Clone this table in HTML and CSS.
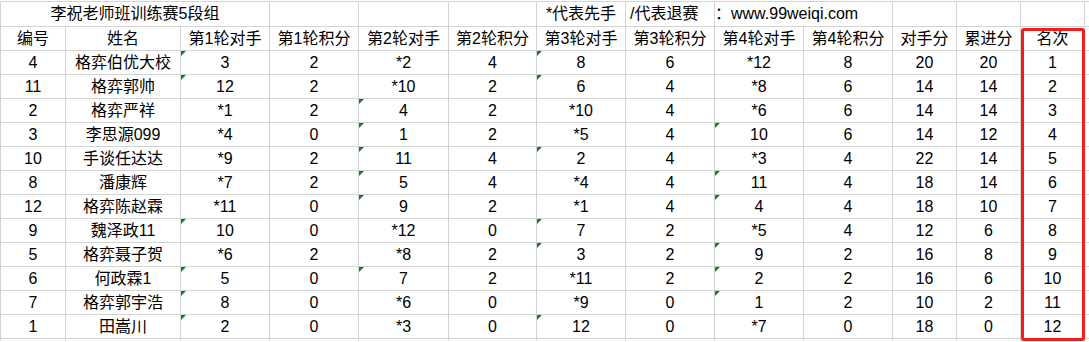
FILE: index.html
```html
<!DOCTYPE html>
<html lang="zh-CN">
<head>
<meta charset="utf-8">
<title>李祝老师班训练赛5段组</title>
<link rel="stylesheet" href="styles.css">
</head>
<body>
<div class="sheet">
  <div class="cell title">李祝老师班训练赛5段组</div>
  <div class="cell"></div><div class="cell"></div><div class="cell"></div>
  <div class="cell">*代表先手</div>
  <div class="cell note">/代表退赛</div>
  <div class="cell link">：www.99weiqi.com</div>
  <div class="cell"></div><div class="cell"></div><div class="cell"></div><div class="cell"></div>

  <div class="cell">编号</div><div class="cell">姓名</div><div class="cell">第1轮对手</div><div class="cell">第1轮积分</div><div class="cell">第2轮对手</div><div class="cell">第2轮积分</div><div class="cell">第3轮对手</div><div class="cell">第3轮积分</div><div class="cell">第4轮对手</div><div class="cell">第4轮积分</div><div class="cell">对手分</div><div class="cell">累进分</div><div class="cell">名次</div><div class="cell"></div>

  <div class="cell">4</div><div class="cell">格弈伯优大校</div><div class="cell txt">3</div><div class="cell">2</div><div class="cell">*2</div><div class="cell">4</div><div class="cell txt">8</div><div class="cell">6</div><div class="cell">*12</div><div class="cell">8</div><div class="cell">20</div><div class="cell">20</div><div class="cell">1</div><div class="cell"></div>
  <div class="cell">11</div><div class="cell">格弈郭帅</div><div class="cell txt">12</div><div class="cell">2</div><div class="cell">*10</div><div class="cell">2</div><div class="cell txt">6</div><div class="cell">4</div><div class="cell">*8</div><div class="cell">6</div><div class="cell">14</div><div class="cell">14</div><div class="cell">2</div><div class="cell"></div>
  <div class="cell">2</div><div class="cell">格弈严祥</div><div class="cell">*1</div><div class="cell">2</div><div class="cell txt">4</div><div class="cell">2</div><div class="cell">*10</div><div class="cell">4</div><div class="cell">*6</div><div class="cell">6</div><div class="cell">14</div><div class="cell">14</div><div class="cell">3</div><div class="cell"></div>
  <div class="cell">3</div><div class="cell">李思源099</div><div class="cell">*4</div><div class="cell">0</div><div class="cell txt">1</div><div class="cell">2</div><div class="cell">*5</div><div class="cell">4</div><div class="cell txt">10</div><div class="cell">6</div><div class="cell">14</div><div class="cell">12</div><div class="cell">4</div><div class="cell"></div>
  <div class="cell">10</div><div class="cell">手谈任达达</div><div class="cell">*9</div><div class="cell">2</div><div class="cell txt">11</div><div class="cell">4</div><div class="cell txt">2</div><div class="cell">4</div><div class="cell">*3</div><div class="cell">4</div><div class="cell">22</div><div class="cell">14</div><div class="cell">5</div><div class="cell"></div>
  <div class="cell">8</div><div class="cell">潘康辉</div><div class="cell">*7</div><div class="cell">2</div><div class="cell txt">5</div><div class="cell">4</div><div class="cell">*4</div><div class="cell">4</div><div class="cell txt">11</div><div class="cell">4</div><div class="cell">18</div><div class="cell">14</div><div class="cell">6</div><div class="cell"></div>
  <div class="cell">12</div><div class="cell">格弈陈赵霖</div><div class="cell">*11</div><div class="cell">0</div><div class="cell txt">9</div><div class="cell">2</div><div class="cell">*1</div><div class="cell">4</div><div class="cell txt">4</div><div class="cell">4</div><div class="cell">18</div><div class="cell">10</div><div class="cell">7</div><div class="cell"></div>
  <div class="cell">9</div><div class="cell">魏泽政11</div><div class="cell txt">10</div><div class="cell">0</div><div class="cell">*12</div><div class="cell">0</div><div class="cell txt">7</div><div class="cell">2</div><div class="cell">*5</div><div class="cell">4</div><div class="cell">12</div><div class="cell">6</div><div class="cell">8</div><div class="cell"></div>
  <div class="cell">5</div><div class="cell">格弈聂子贺</div><div class="cell">*6</div><div class="cell">2</div><div class="cell">*8</div><div class="cell">2</div><div class="cell txt">3</div><div class="cell">2</div><div class="cell txt">9</div><div class="cell">2</div><div class="cell">16</div><div class="cell">8</div><div class="cell">9</div><div class="cell"></div>
  <div class="cell">6</div><div class="cell">何政霖1</div><div class="cell txt">5</div><div class="cell">0</div><div class="cell txt">7</div><div class="cell">2</div><div class="cell">*11</div><div class="cell">2</div><div class="cell txt">2</div><div class="cell">2</div><div class="cell">16</div><div class="cell">6</div><div class="cell">10</div><div class="cell"></div>
  <div class="cell">7</div><div class="cell">格弈郭宇浩</div><div class="cell txt">8</div><div class="cell">0</div><div class="cell">*6</div><div class="cell">0</div><div class="cell">*9</div><div class="cell">0</div><div class="cell txt">1</div><div class="cell">2</div><div class="cell">10</div><div class="cell">2</div><div class="cell">11</div><div class="cell"></div>
  <div class="cell">1</div><div class="cell">田嵩川</div><div class="cell txt">2</div><div class="cell">0</div><div class="cell">*3</div><div class="cell">0</div><div class="cell txt">12</div><div class="cell">0</div><div class="cell">*7</div><div class="cell">0</div><div class="cell">18</div><div class="cell">0</div><div class="cell">12</div><div class="cell"></div>

  <div class="cell"></div><div class="cell"></div><div class="cell"></div><div class="cell"></div><div class="cell"></div><div class="cell"></div><div class="cell"></div><div class="cell"></div><div class="cell"></div><div class="cell"></div><div class="cell"></div><div class="cell"></div><div class="cell"></div><div class="cell"></div>

  <div class="highlight"></div>
</div>
</body>
</html>
```

FILE: styles.css
```css
html, body {
  margin: 0;
  padding: 0;
  background: #ffffff;
  overflow: hidden;
  width: 1089px;
  height: 342px;
}

.sheet {
  position: relative;
  margin-top: 1px;
  padding: 1px 0 0 1px;
  display: grid;
  grid-template-columns: 64px 114px 88px 88px 89px 87px 88px 88px 88px 88px 63px 63px 63px 4px;
  grid-template-rows: 24px repeat(13, 23px) 2px;
  gap: 1px;
  background: #d4d4d4;
  width: max-content;
  font-family: "Liberation Sans", "Noto Sans CJK SC", sans-serif;
  font-size: 16px;
  color: #000000;
}

.cell {
  position: relative;
  background: #ffffff;
  display: flex;
  align-items: center;
  justify-content: center;
  white-space: nowrap;
  line-height: 18px;
  overflow: visible;
}

.title {
  grid-column: span 3;
}

.note {
  justify-content: flex-start;
  padding-left: 4px;
}

.link {
  grid-column: span 2;
  justify-content: flex-start;
  padding-left: 0;
}

.txt::before {
  content: "";
  position: absolute;
  top: 0;
  left: 0;
  width: 0;
  height: 0;
  border-top: 5px solid #1d7a1d;
  border-right: 5px solid transparent;
}

.highlight {
  position: absolute;
  left: 1021px;
  top: 27px;
  width: 64px;
  height: 313px;
  box-sizing: border-box;
  border: 3px solid #f21d1d;
  border-radius: 3px;
  pointer-events: none;
}
```
